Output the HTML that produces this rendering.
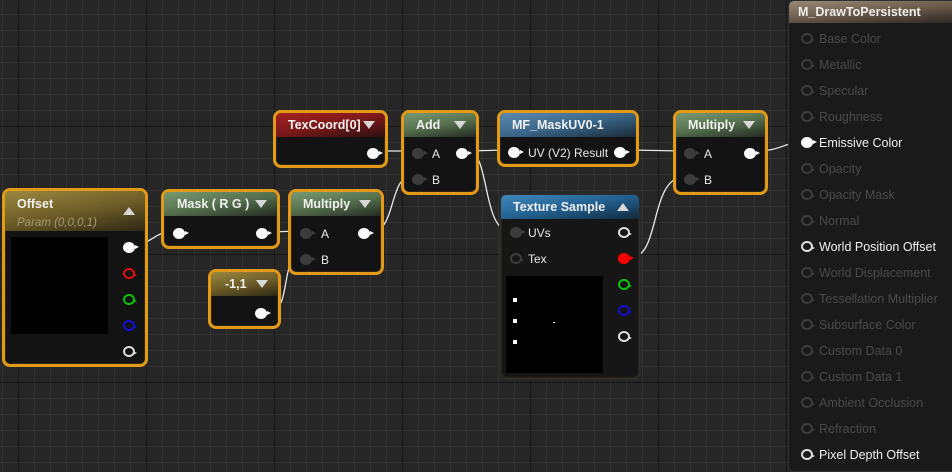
<!DOCTYPE html>
<html><head><meta charset="utf-8">
<style>
*{box-sizing:border-box;margin:0;padding:0}
body{width:952px;height:472px;overflow:hidden;position:relative;font-family:"Liberation Sans","DejaVu Sans",sans-serif;
background-color:#262626;
background-image:
linear-gradient(to right,#171717 1px,transparent 1px),
linear-gradient(to bottom,#171717 1px,transparent 1px),
linear-gradient(to right,#323232 1px,transparent 1px),
linear-gradient(to bottom,#323232 1px,transparent 1px);
background-size:128px 128px,128px 128px,16px 16px,16px 16px;
background-position:18px -2px,18px -2px,2px -2px,2px -2px;}
svg.w{position:absolute;left:0;top:0;z-index:1}
.n{position:absolute;border:3px solid #e39a17;border-radius:8px;background:#121312;z-index:2;box-shadow:inset 0 0 0 1px #2b2418}
.n.plain{border:2px solid #2c2c2c;background:#151615}
.h{position:absolute;left:0;right:0;top:0;height:24px;border-radius:5px 5px 0 0;color:#f0f0f0;font-weight:bold;font-size:12.5px;line-height:24px;padding-left:12px}
.h .tri{position:absolute;right:10px;top:8px;width:0;height:0;border-left:6px solid transparent;border-right:6px solid transparent;border-top:8px solid #d8d8d8}
.h .up{position:absolute;right:10px;top:8px;width:0;height:0;border-left:6px solid transparent;border-right:6px solid transparent;border-bottom:8px solid #d8d8d8}
.red{background:linear-gradient(170deg,#a52222 0%,#7a1818 50%,#2a1010 100%)}
.grn{background:linear-gradient(170deg,#7a9a72 0%,#55704e 50%,#232a22 100%)}
.blu{background:linear-gradient(170deg,#5a8ab0 0%,#3a6688 50%,#1a2a38 100%)}
.tex{background:linear-gradient(170deg,#3f88bb 0%,#236090 50%,#122a3c 100%)}
.olv{background:linear-gradient(170deg,#9a8840 0%,#6e5e28 50%,#2e2814 100%)}
.p{position:absolute;width:12px;height:11px;border-radius:50%;background:#fafafa}
.p::after{content:"";position:absolute;right:-4px;top:3px;border-top:2.5px solid transparent;border-bottom:2.5px solid transparent;border-left:4px solid currentColor}
.p{color:#fafafa}
.p.d{background:#3c3c3c;color:#3c3c3c}
.p.o{background:transparent;border:2px solid #ddd;color:#ddd}
.p.r{background:transparent;border:2px solid #e01010;color:#e01010}
.p.g{background:transparent;border:2px solid #10c010;color:#10c010}
.p.b{background:transparent;border:2px solid #1010d0;color:#1010d0}
.p.k{background:transparent;border:2px solid #3c3c3c;color:#3c3c3c}
.p.rf{background:#f00;color:#f00}
.t{position:absolute;color:#e8e8e8;font-size:12px;line-height:14px}
.panel{position:absolute;left:788px;top:0;width:170px;height:472px;background:#1a1a1a;border:1px solid #2e2e2e;border-radius:6px;z-index:2}
.panel .ph{height:22px;background:linear-gradient(175deg,#9a8a76 0%,#6a5a4a 50%,#2c2622 100%);color:#eee;font-weight:bold;font-size:12.5px;line-height:22px;padding-left:9px;border-radius:5px 5px 0 0}
.row{position:absolute;left:12px;font-size:12.5px;color:#4a4a4a;height:14px;line-height:14px}
.row .p{left:0;top:1px}
.row span{position:absolute;left:18px;white-space:nowrap}
.row.on{color:#f0f0f0}
</style></head><body>
<svg class="w" width="952" height="472" fill="none" stroke="#e8e8e8" stroke-width="1.3">
<path d="M134 245 C150 245,155 232,170 232"/>
<path d="M271 232 L298 231"/>
<path d="M271 311 C290 311,282 257,298 257"/>
<path d="M373 231 C395 231,390 177,410 177"/>
<path d="M382 151 L410 151"/>
<path d="M468 151 L506 150"/>
<path d="M468 151 C490 151,482 231,510 231"/>
<path d="M630 150 L684 151"/>
<path d="M632 257 C660 257,650 177,684 177"/>
<path d="M757 151 C780 151,785 142,804 142"/>
</svg>

<div class="n" style="left:273px;top:110px;width:115px;height:58px">
<div class="h red">TexCoord[0]<i class="tri"></i></div>
<div class="p" style="left:91px;top:35px"></div>
</div>
<div class="n" style="left:401px;top:110px;width:78px;height:85px">
<div class="h grn">Add<i class="tri"></i></div>
<div class="p d" style="left:8px;top:35px"></div><div class="t" style="left:28px;top:34px">A</div>
<div class="p" style="left:52px;top:35px"></div>
<div class="p d" style="left:8px;top:61px"></div><div class="t" style="left:28px;top:60px">B</div>
</div>
<div class="n" style="left:497px;top:110px;width:142px;height:57px">
<div class="h blu">MF_MaskUV0-1</div>
<div class="p" style="left:8px;top:34px"></div>
<div class="t" style="left:28px;top:33px">UV (V2) Result</div>
<div class="p" style="left:114px;top:34px"></div>
</div>
<div class="n" style="left:673px;top:110px;width:95px;height:85px">
<div class="h grn">Multiply<i class="tri"></i></div>
<div class="p d" style="left:8px;top:35px"></div><div class="t" style="left:28px;top:34px">A</div>
<div class="p" style="left:68px;top:35px"></div>
<div class="p d" style="left:8px;top:61px"></div><div class="t" style="left:28px;top:60px">B</div>
</div>
<div class="n plain" style="left:499px;top:193px;width:142px;height:187px">
<div class="h tex">Texture Sample<i class="up"></i></div>
<div class="p d" style="left:9px;top:32px"></div><div class="t" style="left:27px;top:31px">UVs</div>
<div class="p k" style="left:9px;top:58px"></div><div class="t" style="left:27px;top:57px">Tex</div>
<div class="p o" style="left:117px;top:32px"></div>
<div class="p rf" style="left:117px;top:58px"></div>
<div class="p g" style="left:117px;top:84px"></div>
<div class="p b" style="left:117px;top:110px"></div>
<div class="p o" style="left:117px;top:136px"></div>
<div style="position:absolute;left:5px;top:81px;width:97px;height:97px;background:#000">
<i style="position:absolute;left:7px;top:22px;width:4px;height:4px;background:#fff"></i>
<i style="position:absolute;left:7px;top:43px;width:4px;height:4px;background:#fff"></i>
<i style="position:absolute;left:7px;top:64px;width:4px;height:4px;background:#fff"></i>
<i style="position:absolute;left:47px;top:46px;width:2px;height:1px;background:#fff"></i>
</div>
</div>
<div class="n" style="left:2px;top:188px;width:146px;height:179px">
<div class="h olv" style="height:40px;line-height:18px;padding-top:4px">Offset<br><span style="font-weight:normal;font-style:italic;font-size:11.5px;color:#a39a70">Param (0,0,0,1)</span><i class="up" style="top:16px"></i></div>
<div style="position:absolute;left:6px;top:46px;width:97px;height:97px;background:#000"></div>
<div class="p" style="left:118px;top:51px"></div>
<div class="p r" style="left:118px;top:77px"></div>
<div class="p g" style="left:118px;top:103px"></div>
<div class="p b" style="left:118px;top:129px"></div>
<div class="p o" style="left:118px;top:155px"></div>
</div>
<div class="n" style="left:161px;top:189px;width:119px;height:60px">
<div class="h grn" style="padding-left:13px">Mask ( R G )<i class="tri"></i></div>
<div class="p" style="left:9px;top:36px"></div>
<div class="p" style="left:92px;top:36px"></div>
</div>
<div class="n" style="left:288px;top:189px;width:96px;height:86px">
<div class="h grn">Multiply<i class="tri"></i></div>
<div class="p d" style="left:9px;top:36px"></div><div class="t" style="left:30px;top:35px">A</div>
<div class="p" style="left:67px;top:36px"></div>
<div class="p d" style="left:9px;top:62px"></div><div class="t" style="left:30px;top:61px">B</div>
</div>
<div class="n" style="left:208px;top:269px;width:73px;height:60px">
<div class="h olv" style="padding-left:14px">-1,1<i class="tri"></i></div>
<div class="p" style="left:44px;top:36px"></div>
</div>

<div class="panel">
<div class="ph">M_DrawToPersistent</div>
<div class="row" style="top:31px"><i class="p k"></i><span>Base Color</span></div>
<div class="row" style="top:57px"><i class="p k"></i><span>Metallic</span></div>
<div class="row" style="top:83px"><i class="p k"></i><span>Specular</span></div>
<div class="row" style="top:109px"><i class="p k"></i><span>Roughness</span></div>
<div class="row on" style="top:135px"><i class="p"></i><span>Emissive Color</span></div>
<div class="row" style="top:161px"><i class="p k"></i><span>Opacity</span></div>
<div class="row" style="top:187px"><i class="p k"></i><span>Opacity Mask</span></div>
<div class="row" style="top:213px"><i class="p k"></i><span>Normal</span></div>
<div class="row on" style="top:239px"><i class="p o"></i><span>World Position Offset</span></div>
<div class="row" style="top:265px"><i class="p k"></i><span>World Displacement</span></div>
<div class="row" style="top:291px"><i class="p k"></i><span>Tessellation Multiplier</span></div>
<div class="row" style="top:317px"><i class="p k"></i><span>Subsurface Color</span></div>
<div class="row" style="top:343px"><i class="p k"></i><span>Custom Data 0</span></div>
<div class="row" style="top:369px"><i class="p k"></i><span>Custom Data 1</span></div>
<div class="row" style="top:395px"><i class="p k"></i><span>Ambient Occlusion</span></div>
<div class="row" style="top:421px"><i class="p k"></i><span>Refraction</span></div>
<div class="row on" style="top:447px"><i class="p o"></i><span>Pixel Depth Offset</span></div>
</div>
</body></html>
